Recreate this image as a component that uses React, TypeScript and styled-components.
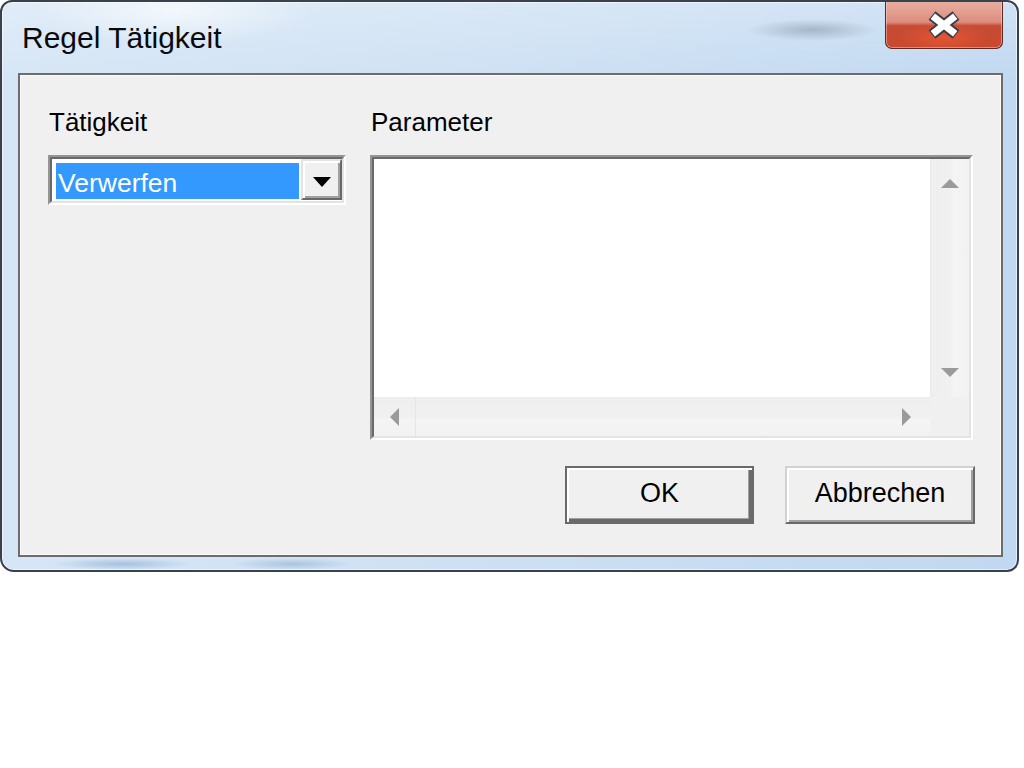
import React from "react";
import styled, { createGlobalStyle } from "styled-components";

const GlobalStyle = createGlobalStyle`
  html, body {
    margin: 0;
    padding: 0;
    background: #ffffff;
  }
  body {
    font-family: "Liberation Sans", Arial, sans-serif;
    color: #000;
  }
`;

const Window = styled.div`
  width: 1019px;
  box-sizing: border-box;
  border: 2px solid #38424f;
  border-radius: 12px 12px 12px 14px;
  overflow: hidden;
  display: flex;
  flex-direction: column;
  padding-bottom: 13px;
  box-shadow: inset 0 0 0 1px rgba(255, 255, 255, 0.6);
  background:
    radial-gradient(ellipse 65px 11px at 810px 28px, rgba(105, 118, 135, 0.4), rgba(105, 118, 135, 0) 100%),
    radial-gradient(ellipse 140px 34px at 170px 8px, rgba(255, 255, 255, 0.65), rgba(255, 255, 255, 0) 100%),
    radial-gradient(ellipse 70px 6px at 120px 562px, rgba(80, 125, 180, 0.35), rgba(80, 125, 180, 0) 100%),
    radial-gradient(ellipse 60px 6px at 290px 562px, rgba(80, 125, 180, 0.3), rgba(80, 125, 180, 0) 100%),
    linear-gradient(to bottom, rgba(255, 255, 255, 0.25) 0, rgba(255, 255, 255, 0) 80px),
    linear-gradient(to right, #d6e6f6 0%, #cde0f3 50%, #c0d8f1 100%);
`;

const TitleBar = styled.div`
  height: 71px;
  display: flex;
  justify-content: space-between;
  align-items: flex-start;
  padding: 0 14px 0 20px;
`;

const Title = styled.div`
  margin-top: 19px;
  font-size: 30px;
  line-height: 34px;
  color: #0a0a0a;
`;

const CloseButton = styled.div`
  width: 118px;
  height: 49px;
  margin-top: -2px;
  box-sizing: border-box;
  border: 1px solid #5b2a22;
  border-top: none;
  border-radius: 0 0 7px 7px;
  display: flex;
  align-items: center;
  justify-content: center;
  padding-top: 2px;
  box-shadow: inset 0 0 0 1px rgba(255, 220, 210, 0.45);
  background:
    radial-gradient(ellipse 45px 14px at 50% 78%, rgba(240, 90, 50, 0.7), rgba(240, 90, 50, 0) 100%),
    linear-gradient(to bottom, #eab0a4 0%, #dc8e7e 46%, #c64b34 54%, #c9492f 100%);
`;

const Client = styled.div`
  margin: 0 14px 0 16px;
  border: 2px solid #6c6c6c;
  box-shadow: inset 0 0 0 1px #fbfbfb;
  background: #f0f0f0;
  padding: 32px 28px 31px 28px;
  display: flex;
  flex-direction: column;
`;

const FormGrid = styled.div`
  display: grid;
  grid-template-columns: 298px 1fr;
  column-gap: 24px;
  row-gap: 17px;
`;

const Label = styled.div`
  font-size: 26px;
  line-height: 31px;
  color: #000;
  padding-left: 1px;
`;

const Sunken = styled.div<{ $height: number }>`
  height: ${(p) => p.$height}px;
  align-self: start;
  box-sizing: border-box;
  border: 2px solid;
  border-color: #959595 #ffffff #ffffff #959595;
`;

const ComboInner = styled.div`
  height: 100%;
  box-sizing: border-box;
  border: 2px solid;
  border-color: #696969 #e3e3e3 #e3e3e3 #696969;
  background: #ffffff;
  display: flex;
  align-items: flex-start;
`;

const FieldWrap = styled.div`
  flex: 1;
  height: 100%;
  box-sizing: border-box;
  padding: 4px 2px 2px 4px;
`;

const Selected = styled.div`
  height: 100%;
  box-sizing: border-box;
  background: #3399ff;
  color: #ffffff;
  font-size: 26.5px;
  line-height: 31px;
  padding: 5px 0 0 2px;
`;

const DropButton = styled.div`
  width: 41px;
  height: 41px;
  box-sizing: border-box;
  border: 2px solid;
  border-color: #e3e3e3 #696969 #696969 #e3e3e3;
  box-shadow: inset 2px 2px 0 #ffffff, inset -2px -2px 0 #a0a0a0;
  background: #f0f0f0;
  display: flex;
  align-items: center;
  justify-content: center;
  padding-top: 4px;
`;

const ListInner = styled.div`
  height: 100%;
  box-sizing: border-box;
  border: 2px solid;
  border-color: #696969 #e3e3e3 #e3e3e3 #696969;
  display: grid;
  grid-template-columns: 1fr 39px;
  grid-template-rows: 1fr 39px;
`;

const ListArea = styled.div`
  background: #ffffff;
`;

const VScroll = styled.div`
  display: flex;
  flex-direction: column;
  justify-content: space-between;
  background: linear-gradient(to right, #e9e9e9 0, #efefef 2px, #f0f0f0 50%, #f4f4f4 60%, #f2f2f2 100%);
`;

const HScroll = styled.div`
  display: flex;
  justify-content: space-between;
  background: linear-gradient(to bottom, #e9e9e9 0, #efefef 2px, #f0f0f0 50%, #f4f4f4 60%, #f2f2f2 100%);
`;

const Corner = styled.div`
  background: #f0f0f0;
`;

const ArrowCell = styled.div<{ $w?: number; $h?: number; $line?: "right" | "left" | "none" }>`
  width: ${(p) => (p.$w ? `${p.$w}px` : "100%")};
  height: ${(p) => (p.$h ? `${p.$h}px` : "100%")};
  display: flex;
  align-items: center;
  justify-content: center;
  box-sizing: border-box;
  border-right: ${(p) => (p.$line === "right" ? "1px solid #e6e6e6" : "none")};
  border-left: ${(p) => (p.$line === "left" ? "1px solid #e6e6e6" : "none")};
`;

const ButtonRow = styled.div`
  display: flex;
  justify-content: flex-end;
  gap: 31px;
  margin-top: 26px;
  margin-right: -2px;
`;

const PushButton = styled.div<{ $width: number; $default?: boolean }>`
  width: ${(p) => p.$width}px;
  height: 58px;
  box-sizing: border-box;
  border: 2px solid;
  border-color: ${(p) => (p.$default ? "#6a6a6a" : "#d2d2d2 #696969 #696969 #d2d2d2")};
  box-shadow: ${(p) =>
    p.$default
      ? "inset 2px 2px 0 #ffffff, inset -3px -3px 0 #6a6a6a, inset -4px -4px 0 #a0a0a0"
      : "inset 2px 2px 0 #ffffff, inset -2px -2px 0 #a0a0a0"};
  background: #f0f0f0;
  font-size: 27px;
  line-height: 31px;
  color: #000;
  display: flex;
  align-items: center;
  justify-content: center;
  padding-bottom: 4px;
`;

const Tri = ({ dir, color = "#9a9a9a", w = 18, h = 9 }: { dir: "up" | "down" | "left" | "right"; color?: string; w?: number; h?: number }) => {
  const vertical = dir === "up" || dir === "down";
  const width = vertical ? w : h;
  const height = vertical ? h : w;
  let pts = "";
  if (dir === "up") pts = `0,${h} ${w / 2},0 ${w},${h}`;
  if (dir === "down") pts = `0,0 ${w},0 ${w / 2},${h}`;
  if (dir === "left") pts = `${h},0 ${h},${w} 0,${w / 2}`;
  if (dir === "right") pts = `0,0 ${h},${w / 2} 0,${w}`;
  return (
    <svg width={width} height={height} viewBox={`0 0 ${width} ${height}`}>
      <polygon points={pts} fill={color} />
    </svg>
  );
};

const CloseGlyph = () => (
  <svg width="36" height="30" viewBox="-18 -15 36 30">
    <g strokeLinecap="butt">
      <path d="M-12,-9.5 L12,9.5 M-12,9.5 L12,-9.5" stroke="#3a3d4a" strokeWidth="11" />
      <path d="M-11.2,-8.8 L11.2,8.8 M-11.2,8.8 L11.2,-8.8" stroke="#ffffff" strokeWidth="7" />
    </g>
  </svg>
);

export default function App() {
  return (
    <>
      <GlobalStyle />
      <Window>
        <TitleBar>
          <Title>Regel Tätigkeit</Title>
          <CloseButton>
            <CloseGlyph />
          </CloseButton>
        </TitleBar>
        <Client>
          <FormGrid>
            <Label>Tätigkeit</Label>
            <Label>Parameter</Label>
            <Sunken $height={50}>
              <ComboInner>
                <FieldWrap>
                  <Selected>Verwerfen</Selected>
                </FieldWrap>
                <DropButton>
                  <Tri dir="down" color="#000000" w={18} h={10} />
                </DropButton>
              </ComboInner>
            </Sunken>
            <Sunken $height={285}>
              <ListInner>
                <ListArea />
                <VScroll>
                  <ArrowCell $h={48}>
                    <Tri dir="up" />
                  </ArrowCell>
                  <ArrowCell $h={50}>
                    <Tri dir="down" />
                  </ArrowCell>
                </VScroll>
                <HScroll>
                  <ArrowCell $w={42} $line="right">
                    <Tri dir="left" />
                  </ArrowCell>
                  <ArrowCell $w={48}>
                    <Tri dir="right" />
                  </ArrowCell>
                </HScroll>
                <Corner />
              </ListInner>
            </Sunken>
          </FormGrid>
          <ButtonRow>
            <PushButton $width={189} $default>
              OK
            </PushButton>
            <PushButton $width={190}>Abbrechen</PushButton>
          </ButtonRow>
        </Client>
      </Window>
    </>
  );
}
